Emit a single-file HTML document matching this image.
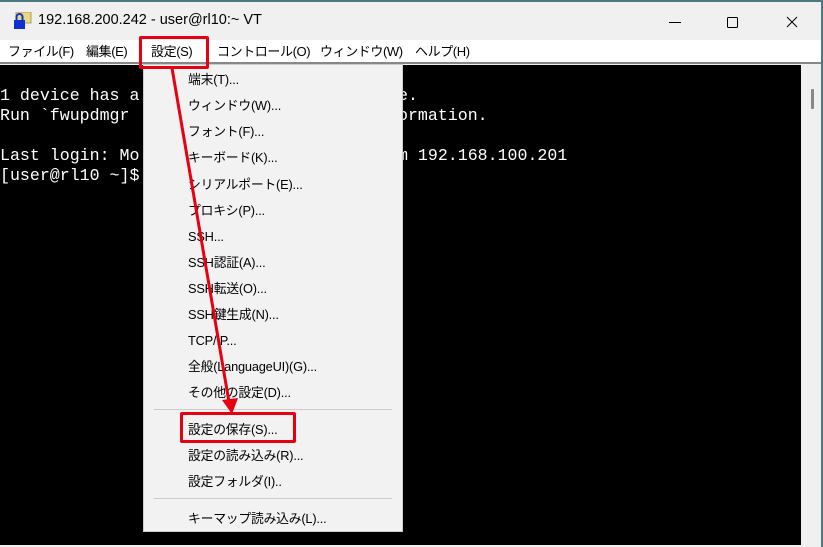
<!DOCTYPE html>
<html><head><meta charset="utf-8"><style>
*{margin:0;padding:0;box-sizing:border-box}
body{width:823px;height:547px;background:#4a7a80;position:relative;overflow:hidden;font-family:"Liberation Sans","Noto Sans CJK JP",sans-serif}
#win{position:absolute;left:0;top:2px;width:821px;height:545px;background:#f0f0f0}
#title{position:absolute;left:0;top:0;width:821px;height:38px;background:#f0f0f0;font-size:14.5px;color:#000}
#title .t{position:absolute;left:38px;top:10px}
#menubar{position:absolute;left:0;top:38px;width:821px;height:24px;background:#fff;font-size:13px;border-bottom:2px solid #888}
#menubar span{position:absolute;top:0;line-height:24px;letter-spacing:-0.4px}
#term{position:absolute;left:0;top:63px;width:801px;height:480px;background:#000;color:#fff;font-family:"Liberation Mono",monospace;font-size:16.6px;line-height:20px;white-space:pre}
#term div{position:absolute;height:20px}
#sb{position:absolute;left:801px;top:63px;width:20px;height:480px;background:#f0f0f0}
#sb i{position:absolute;left:10px;top:24px;width:3px;height:20px;background:#888;border-radius:1px}
#menu{position:absolute;left:143px;top:64px;width:260px;height:468px;background:#f2f2f2;border:1px solid #ccc;font-size:12.8px;color:#000}
#menu div.i{position:absolute;left:44px;white-space:nowrap;height:20px;line-height:20px;letter-spacing:-0.2px}
#menu hr{position:absolute;left:10px;width:238px;border:0;border-top:1px solid #ccc}
.box{position:absolute;border:3px solid #e60012;border-radius:2px}
</style></head><body>
<div id="win">
<div id="title">
<svg style="position:absolute;left:12px;top:10px" width="20" height="18"><rect x="4" y="0" width="15" height="11" fill="#e8d880" stroke="#b0a050"/><rect x="2" y="8" width="11" height="9" fill="#1030d0"/><path d="M4.5 8V5a3 3 0 0 1 6 0v3" stroke="#1030d0" stroke-width="2" fill="none"/></svg>
<span class="t">192.168.200.242 - user@rl10:~ VT</span>
<svg style="position:absolute;left:640px;top:0" width="181" height="38" stroke="#000" fill="none" stroke-width="1"><path d="M29 20.5h12"/><rect x="87.5" y="15.5" width="10" height="10" rx="1"/><path d="M147 15l10 10M157 15l-10 10"/></svg>
</div>
<div id="menubar">
<span style="left:8px">ファイル(F)</span><span style="left:86px">編集(E)</span><span style="left:151px">設定(S)</span><span style="left:217px">コントロール(O)</span><span style="left:320px">ウィンドウ(W)</span><span style="left:415px">ヘルプ(H)</span>
</div>
<div id="term">
<div style="left:0;top:21px">1 device has a</div>
<div style="left:0;top:41px">Run `fwupdmgr</div>
<div style="left:0;top:81px">Last login: Mo</div>
<div style="left:0;top:101px">[user@rl10 ~]$</div>
<div style="left:398px;top:21px">e.</div>
<div style="left:398px;top:41px">ormation.</div>
<div style="left:398px;top:81px">m 192.168.100.201</div>
</div>
<div id="sb"><i></i></div>
</div>
<div id="menu">
<div class="i" style="top:5px">端末(T)...</div>
<div class="i" style="top:31px">ウィンドウ(W)...</div>
<div class="i" style="top:57px">フォント(F)...</div>
<div class="i" style="top:83px">キーボード(K)...</div>
<div class="i" style="top:110px">シリアルポート(E)...</div>
<div class="i" style="top:136px">プロキシ(P)...</div>
<div class="i" style="top:162px">SSH...</div>
<div class="i" style="top:188px">SSH認証(A)...</div>
<div class="i" style="top:214px">SSH転送(O)...</div>
<div class="i" style="top:240px">SSH鍵生成(N)...</div>
<div class="i" style="top:266px">TCP/IP...</div>
<div class="i" style="top:292px">全般(LanguageUI)(G)...</div>
<div class="i" style="top:318px">その他の設定(D)...</div>
<hr style="top:344px">
<div class="i" style="top:355px">設定の保存(S)...</div>
<div class="i" style="top:381px">設定の読み込み(R)...</div>
<div class="i" style="top:407px">設定フォルダ(I)..</div>
<hr style="top:433px">
<div class="i" style="top:444px">キーマップ読み込み(L)...</div>
</div>
<div class="box" style="left:139px;top:36px;width:70px;height:33px"></div>
<div class="box" style="left:180px;top:412px;width:116px;height:31px"></div>
<svg style="position:absolute;left:0;top:0" width="823" height="547"><line x1="172" y1="68" x2="229" y2="402" stroke="#e60012" stroke-width="3"/><path d="M222 400L232 414L238 398Z" fill="#e60012"/></svg>
</body></html>
